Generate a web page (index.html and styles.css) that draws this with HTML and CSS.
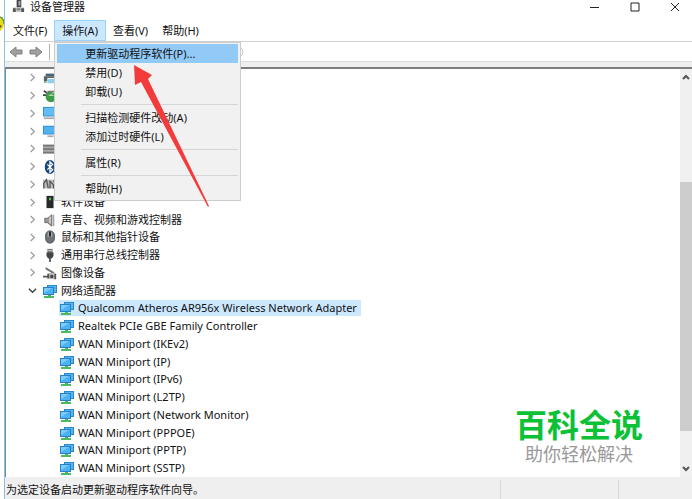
FILE: index.html
```
<!DOCTYPE html>
<html lang="zh-CN">
<head>
    <meta charset="UTF-8">
    <meta name="viewport" content="width=device-width, initial-scale=1.0">
    <title>设备管理器</title>
    <link rel="stylesheet" href="styles.css">
</head>
<body>
    <!-- Shared icons -->
    <svg class="sprite" aria-hidden="true">
        <symbol id="net" viewBox="0 0 14 14">
            <path d="M4 1h10v8H4z" fill="#2b86cc"/>
            <path d="M5 2h8v6H5z" fill="#56b4f0"/>
            <path d="M0 3h11v8H0z" fill="#2580c6"/>
            <path d="M1 4h9v6H1z" fill="#4db2f4"/>
            <path d="M1 4h8L1 9z" fill="#7cccf9"/>
            <path d="M5 11h3v1h3v2H1v-2h4z" fill="#4dba62"/>
        </symbol>
        <symbol id="closed" viewBox="0 0 8 10">
            <path d="M2 1l4 4-4 4" fill="none" stroke="#a0a0a0" stroke-width="1.500"/>
        </symbol>
        <symbol id="open" viewBox="0 0 10 8">
            <path d="M1 2l4 4 4-4" fill="none" stroke="#444" stroke-width="1.600"/>
        </symbol>
    </svg>

    <div class="desktop-edge">
        <svg class="face" viewBox="0 0 4 16">
            <path d="M0 1c3 1 4 4 4 7s-2 6-4 7z" fill="#e8d91c"/>
            <path d="M0 1c3 1 4 4 4 7" fill="none" stroke="#549d35" stroke-width="1.500"/>
            <path d="M0 9l2 1-2 2z" fill="#6a5b10"/>
        </svg>
    </div>

    <div class="window">
        <header class="title-bar">
            <svg class="app-icon" viewBox="0 0 14 14">
                <path d="M5 0h5v8H5z" fill="#444"/>
                <path d="M7 1h2v5H7z" fill="#aaa"/>
                <path d="M1 8h12v5H1z" fill="#c7c7c7"/>
                <path d="M1 9h3v4H1zM10 9h3v4h-3z" fill="#555"/>
                <path d="M5 9h4v2H5z" fill="#777"/>
            </svg>
            <h1>设备管理器</h1>
            <div class="window-buttons">
                <button aria-label="最小化"><svg viewBox="0 0 10 10"><path d="M0 5.500h9"/></svg></button>
                <button aria-label="最大化"><svg viewBox="0 0 10 10"><path d="M1 1h8v8H1z"/></svg></button>
                <button aria-label="关闭"><svg viewBox="0 0 10 10"><path d="M1 1l8 8M9 1L1 9"/></svg></button>
            </div>
        </header>

        <nav class="menu-bar">
            <button>文件(F)</button>
            <div class="menu-group">
                <button class="active">操作(A)</button>
                <div class="menu">
                    <button class="selected">更新驱动程序软件(P)...</button>
                    <button>禁用(D)</button>
                    <button>卸载(U)</button>
                    <hr>
                    <button>扫描检测硬件改动(A)</button>
                    <button>添加过时硬件(L)</button>
                    <hr>
                    <button>属性(R)</button>
                    <hr>
                    <button>帮助(H)</button>
                </div>
            </div>
            <button>查看(V)</button>
            <button>帮助(H)</button>
        </nav>

        <div class="toolbar">
            <button aria-label="后退"><svg viewBox="0 0 14 12"><path d="M1 6l6-5v3h6v4H7v3z"/></svg></button>
            <button aria-label="前进"><svg viewBox="0 0 14 12"><path d="M13 6L7 1v3H1v4h6v3z"/></svg></button>
            <span class="divider"></span>
            <svg class="toolbar-end" viewBox="0 0 4 12"><path d="M1 1q4 5 0 10" fill="none" stroke="#bbb"/></svg>
        </div>

        <main class="panel">
            <ul class="tree">
                <li><svg class="arrow"><use href="#closed"/></svg>
                    <svg class="icon" viewBox="0 0 16 16"><path d="M3 3h13v3H3z" fill="#4b6470"/><path d="M1 6h15v2H5v4H1z" fill="#566"/><path d="M6 9h10v5H5z" fill="#8fd0ec"/><path d="M1 13h3" stroke="#3a8"/></svg></li>
                <li><svg class="arrow"><use href="#closed"/></svg>
                    <svg class="icon" viewBox="0 0 16 16"><path d="M1 2l4 3M0 7h4" stroke="#444" stroke-width="2"/><path d="M5 2h11v12H6z" fill="#777"/><circle cx="9" cy="9" r="6" fill="#3d9b45"/><path d="M6 8q3-4 7 0z" fill="#a8dda0"/><path d="M10 5l4-2" stroke="#ddd"/></svg></li>
                <li><svg class="arrow"><use href="#closed"/></svg>
                    <svg class="icon" viewBox="0 0 16 16"><path d="M0 1h16v11H0z" fill="#3389c9"/><path d="M1 2h15v9H1z" fill="#63bdf5"/><path d="M1 14h15" stroke="#aaa" stroke-width="2"/></svg></li>
                <li><svg class="arrow"><use href="#closed"/></svg>
                    <svg class="icon" viewBox="0 0 16 16"><path d="M0 2h16v10H0z" fill="#3389c9"/><path d="M1 3h14v8H1z" fill="#52b2f1"/><path d="M5 14h7" stroke="#aaa" stroke-width="2"/></svg></li>
                <li><svg class="arrow"><use href="#closed"/></svg>
                    <svg class="icon" viewBox="0 0 16 16"><path d="M0 3h16v10H0z" fill="#aaa"/><path d="M0 4h16M0 8h16M0 12h16" stroke="#777" stroke-width="2"/></svg></li>
                <li><svg class="arrow"><use href="#closed"/></svg>
                    <svg class="icon" viewBox="0 0 16 16"><ellipse cx="8" cy="8" rx="6" ry="8" fill="#17477f"/><path d="M5 5l6 6-3 3V2l3 3-6 6" fill="none" stroke="#fff" stroke-width="1.500"/></svg></li>
                <li><svg class="arrow"><use href="#closed"/></svg>
                    <svg class="icon" viewBox="0 0 16 16"><path d="M0 3h16v10H0z" fill="#b8bec0"/><path d="M1 13V7l3-4 2 10M8 13V5l4 4v4M12 4l4 7" fill="none" stroke="#555" stroke-width="1.500"/></svg></li>
                <li><svg class="arrow"><use href="#closed"/></svg>
                    <svg class="icon" viewBox="0 0 16 16"><path d="M4 1h8v14H4z" fill="#292929"/><path d="M7 3h2v3H7z" fill="#50db62"/><path d="M12 2v13" stroke="#888"/></svg><span>软件设备</span></li>
                <li><svg class="arrow"><use href="#closed"/></svg>
                    <svg class="icon" viewBox="0 0 16 16"><path d="M2 6h3l5-4v13l-5-4H2z" fill="#999" stroke="#666"/><path d="M8 4v8" stroke="#ccc" stroke-width="2"/><path d="M12 2v13" stroke="#aaa" stroke-width="2"/></svg><span>声音、视频和游戏控制器</span></li>
                <li><svg class="arrow"><use href="#closed"/></svg>
                    <svg class="icon" viewBox="0 0 16 16"><rect x="3" y="1" width="10" height="14" rx="5" fill="#6d7377" stroke="#424a50"/><path d="M6 2v6M10 2v6" stroke="#bac2c6"/><path d="M8 2v5" stroke="#222" stroke-width="2"/></svg><span>鼠标和其他指针设备</span></li>
                <li><svg class="arrow"><use href="#closed"/></svg>
                    <svg class="icon" viewBox="0 0 16 16"><path d="M5 1h6v5H5z" fill="#777"/><path d="M4 5h8v4l-2 3H6L4 9z" fill="#444"/><path d="M8 11v5" stroke="#555" stroke-width="2"/><path d="M6 3h4" stroke="#ddd"/></svg><span>通用串行总线控制器</span></li>
                <li><svg class="arrow"><use href="#closed"/></svg>
                    <svg class="icon" viewBox="0 0 16 16"><path d="M3 1l10 6-1 2-9-5z" fill="#777"/><path d="M5 8h10v7H5z" fill="#bbb"/><path d="M0 12h5M6 9v5M14 9v6" stroke="#555" stroke-width="2"/><circle cx="10" cy="12" r="2" fill="#444"/></svg><span>图像设备</span></li>
                <li><svg class="arrow"><use href="#open"/></svg>
                    <svg class="icon"><use href="#net"/></svg><span>网络适配器</span></li>
                <li class="child"><div class="device selected"><svg class="icon"><use href="#net"/></svg><span>Qualcomm Atheros AR956x Wireless Network Adapter</span></div></li>
                <li class="child"><div class="device"><svg class="icon"><use href="#net"/></svg><span>Realtek PCIe GBE Family Controller</span></div></li>
                <li class="child"><div class="device"><svg class="icon"><use href="#net"/></svg><span>WAN Miniport (IKEv2)</span></div></li>
                <li class="child"><div class="device"><svg class="icon"><use href="#net"/></svg><span>WAN Miniport (IP)</span></div></li>
                <li class="child"><div class="device"><svg class="icon"><use href="#net"/></svg><span>WAN Miniport (IPv6)</span></div></li>
                <li class="child"><div class="device"><svg class="icon"><use href="#net"/></svg><span>WAN Miniport (L2TP)</span></div></li>
                <li class="child"><div class="device"><svg class="icon"><use href="#net"/></svg><span>WAN Miniport (Network Monitor)</span></div></li>
                <li class="child"><div class="device"><svg class="icon"><use href="#net"/></svg><span>WAN Miniport (PPPOE)</span></div></li>
                <li class="child"><div class="device"><svg class="icon"><use href="#net"/></svg><span>WAN Miniport (PPTP)</span></div></li>
                <li class="child"><div class="device"><svg class="icon"><use href="#net"/></svg><span>WAN Miniport (SSTP)</span></div></li>
            </ul>
            <div class="scrollbar">
                <button aria-label="向上"><svg viewBox="0 0 8 8"><path d="M1 6l3-3 3 3"/></svg></button>
                <div class="track"><div class="thumb"></div></div>
                <button aria-label="向下"><svg viewBox="0 0 8 8"><path d="M1 2l3 3 3-3"/></svg></button>
            </div>
        </main>

        <footer class="status-bar">
            <span class="status-text">为选定设备启动更新驱动程序软件向导。</span>
            <span class="status-cell"></span>
            <span class="status-cell"></span>
        </footer>
    </div>

    <svg class="pointer" viewBox="0 0 78 144" aria-hidden="true">
        <path d="M1 1l1 20 6-3 67 125 1-1L15 15l4-4z" fill="#f43b3b"/>
    </svg>

    <div class="watermark">
        <strong>百科全说</strong>
        <span>助你轻松解决</span>
    </div>
</body>
</html>
```
FILE: styles.css
```
* {
    box-sizing: border-box;
}

body {
    display: flex;
    height: 100vh;
    margin: 0;
    overflow: hidden;
    position: relative;
    background-color: #fff;
    color: #111;
    font-family: "Noto Sans", "Noto Sans CJK SC", sans-serif;
    font-size: 11px;
    line-height: 16px;
}

button {
    padding: 0;
    border: none;
    background: none;
    color: inherit;
    font: inherit;
    white-space: nowrap;
}

svg {
    display: block;
    flex: none;
}

.sprite {
    position: absolute;
    width: 0;
    height: 0;
}

.desktop-edge {
    width: 4px;
    padding-top: 16px;
}

.face {
    width: 4px;
    height: 16px;
}

.window {
    flex: 1;
    min-width: 0;
    display: flex;
    flex-direction: column;
    border-left: 1px solid #8dbfdf;
}

/* Title bar */
.title-bar {
    display: flex;
    align-items: center;
    height: 20px;
    padding: 0 12px 7px 7px;
}

.app-icon {
    width: 13px;
    height: 13px;
}

h1 {
    flex: 1;
    margin: 0 0 0 5px;
    font-size: 11px;
    font-weight: normal;
}

.window-buttons {
    display: flex;
    gap: 30px;
}

.window-buttons svg {
    width: 10px;
    height: 10px;
    fill: none;
    stroke: #222;
}

/* Menus */
.menu-bar {
    display: flex;
    height: 22px;
    padding-left: 1px;
    border-bottom: 1px solid #d0d0d0;
}

.menu-bar > button,
.menu-group > button {
    height: 21px;
    padding: 0 7px;
}

.menu-group {
    position: relative;
}

.menu-group > .active {
    background-color: #cce8ff;
    border: 1px solid #99d1ff;
}

.menu {
    position: absolute;
    top: 22px;
    left: 0;
    z-index: 2;
    width: 187px;
    padding: 1px 2px 2px;
    background-color: #f1f1f1;
    border: 1px solid #ccc;
}

.menu button {
    display: block;
    width: 100%;
    height: 19px;
    padding-left: 28px;
    text-align: left;
}

.menu .selected {
    background-color: #91c9f7;
}

.menu hr {
    height: 1px;
    margin: 3px 0 3px 24px;
    border: none;
    background-color: #d5d5d5;
}

.toolbar {
    display: flex;
    align-items: center;
    height: 20px;
    padding: 0 4px;
    gap: 6px;
    border-bottom: 1px solid #ddd;
}

.toolbar button svg {
    width: 14px;
    height: 12px;
    fill: #a0a0a0;
    stroke: #808080;
}

.divider {
    width: 1px;
    height: 16px;
    background-color: #b0b0b0;
}

.toolbar-end {
    width: 4px;
    height: 10px;
    margin-left: 184px;
}

/* Device tree */
.panel {
    flex: 1;
    min-height: 0;
    display: flex;
    border-top: 5px solid #efefef;
}

.tree {
    flex: 1;
    display: flex;
    flex-direction: column;
    margin: 0;
    padding: 0;
    list-style: none;
    border-top: 2px solid #7c7f82;
    border-left: 1px solid #6d8ca5;
}

.tree li {
    flex: 1;
    min-height: 0;
    display: flex;
    align-items: center;
    padding-left: 22px;
    white-space: nowrap;
}

.arrow {
    width: 9px;
    height: 9px;
    margin-right: 6px;
}

.icon {
    width: 14px;
    height: 14px;
    margin-right: 4px;
}

.tree .child {
    padding-left: 53px;
}

.device {
    display: flex;
    align-items: center;
    padding: 0 4px 0 1px;
}

.device.selected {
    background-color: #cce8ff;
}

.scrollbar {
    display: flex;
    flex-direction: column;
    width: 12px;
    background-color: #f0f0f0;
    border-top: 2px solid #7c7f82;
}

.scrollbar button {
    height: 16px;
}

.scrollbar svg {
    width: 8px;
    height: 8px;
    margin: 0 auto;
    fill: none;
    stroke: #555;
    stroke-width: 2;
}

.track {
    flex: 1;
    display: flex;
    flex-direction: column;
    justify-content: flex-end;
    padding-bottom: 30px;
}

.thumb {
    height: 72%;
    background-color: #cdcdcd;
}

/* Status bar */
.status-bar {
    display: flex;
    align-items: center;
    height: 22px;
    padding-top: 3px;
    background-color: #efefef;
}

.status-text {
    flex: 1;
    padding-left: 1px;
}

.status-cell {
    width: 118px;
    height: 100%;
    border-left: 1px solid #d8d8d8;
}

.status-cell:last-child {
    width: 74px;
}

/* Overlays */
.pointer {
    position: absolute;
    top: 64px;
    left: 133px;
    z-index: 3;
    width: 78px;
    height: 144px;
}

.watermark {
    position: absolute;
    right: 49px;
    bottom: 34px;
    display: flex;
    flex-direction: column;
    align-items: center;
    font-family: "Noto Sans CJK SC", sans-serif;
}

.watermark strong {
    color: #0cc135;
    font-size: 32px;
    line-height: 36px;
}

.watermark span {
    color: #999;
    font-size: 18px;
    line-height: 24px;
}
```
